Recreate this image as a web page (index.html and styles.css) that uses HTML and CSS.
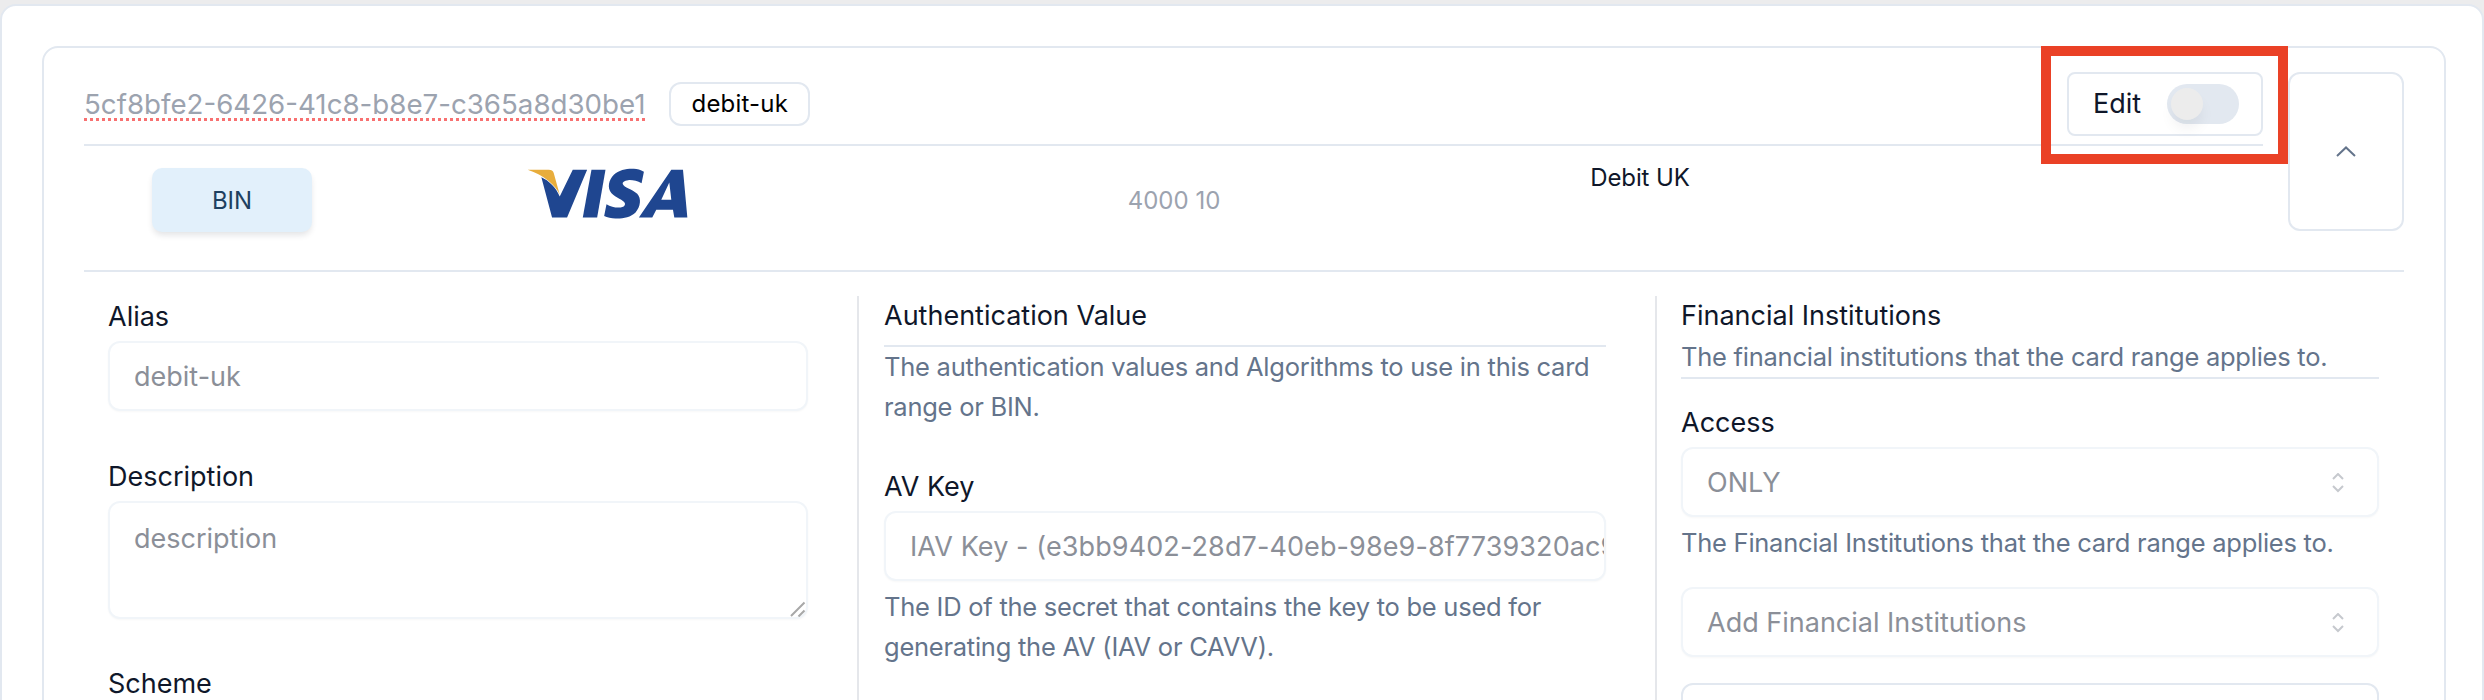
FILE: index.html
```html
<!DOCTYPE html>
<html lang="en">
<head>
<meta charset="utf-8">
<title>Card range</title>
<link rel="stylesheet" href="styles.css">
</head>
<body>
<main class="outer">
  <section class="card">
    <div class="top">
      <div class="top-main">
        <div class="header">
          <div class="ident">
            <span class="uuid">5cf8bfe2-6426-41c8-b8e7-c365a8d30be1</span>
            <span class="badge">debit-uk</span>
          </div>
          <div class="edit-box">
            <span class="edit-label">Edit</span>
            <span class="toggle"><span class="knob"></span></span>
          </div>
          <div class="highlight"></div>
        </div>
        <div class="summary">
          <div class="cell-bin"><span class="bin">BIN</span></div>
          <div class="cell-visa">
            <svg class="visa" viewBox="85 55 485 155" aria-label="VISA">
              <path fill="#e8ad3c" d="M87 60H150C158 60 163 63 165 70L183 135C172 108 135 75 87 60Z"/>
              <path fill="#1f4690" d="M128 82C150 92 172 112 183 140L222 60H265L205 203H160Z"/>
              <path fill="#1f4690" d="M278 60H320L295 203H252Z"/>
              <path fill="#1f4690" d="M435 66L428 100C415 93 400 90 388 91C376 92 370 97 372 103C375 112 400 118 415 132C428 146 425 170 410 188C395 203 370 207 350 206C338 205 325 203 316 198L323 163C335 170 350 174 362 173C374 172 380 167 378 160C375 150 350 143 338 130C324 114 330 90 345 75C360 60 385 56 405 57C415 57 425 60 435 66Z"/>
              <path fill="#1f4690" fill-rule="evenodd" d="M517 60H552L565 203H526L522 180H472L460 203H420ZM517 150L511 98L487 150Z"/>
            </svg>
          </div>
          <div class="cell-range">4000 10</div>
          <div class="cell-name">Debit UK</div>
        </div>
      </div>
      <button class="collapse" type="button" aria-label="Collapse">
        <svg viewBox="0 0 20 11" class="chev"><path d="M1 10L10 1.500L19 10"/></svg>
      </button>
    </div>
    <div class="columns">
      <div class="col col-first">
        <label class="label">Alias</label>
        <div class="field">debit-uk</div>
        <label class="label label-gap">Description</label>
        <div class="field field-area">
          description
          <svg class="grip" viewBox="0 0 16 16"><path d="M1 15L14.500 1.500M8.500 15.500L14.500 9.500"/></svg>
        </div>
        <label class="label label-gap-2">Scheme</label>
      </div>
      <div class="col col-mid">
        <h3 class="heading heading-ruled">Authentication Value</h3>
        <p class="help">The authentication values and Algorithms to use in this card range or BIN.</p>
        <label class="label av-label">AV Key</label>
        <div class="field field-clip"><span class="clip-text">IAV Key - (e3bb9402-28d7-40eb-98e9-8f7739320ac9)</span></div>
        <p class="help help-after">The ID of the secret that contains the key to be used for generating the AV (IAV or CAVV).</p>
      </div>
      <div class="col col-last">
        <h3 class="heading">Financial Institutions</h3>
        <p class="help help-ruled">The financial institutions that the card range applies to.</p>
        <label class="label access-label">Access</label>
        <div class="field field-select">ONLY
          <svg class="updown" viewBox="0 0 12 20"><path d="M1 6L6 1L11 6M1 13L6 18L11 13"/></svg>
        </div>
        <p class="help help-after">The Financial Institutions that the card range applies to.</p>
        <div class="field field-select fi-select">Add Financial Institutions
          <svg class="updown" viewBox="0 0 12 20"><path d="M1 6L6 1L11 6M1 13L6 18L11 13"/></svg>
        </div>
        <div class="field field-empty"></div>
      </div>
    </div>
  </section>
</main>
</body>
</html>
```
FILE: styles.css
```css
* { box-sizing: border-box; }
html, body { margin: 0; height: 700px; overflow: hidden; }
body {
  background: #ececed;
  font-family: Inter, "Liberation Sans", sans-serif;
  font-size: 27px;
  line-height: 40px;
  color: #0f172a;
  padding-top: 4px;
}
.outer {
  height: 760px;
  background: #fff;
  border: 2px solid #e2e8f0;
  border-radius: 16px 16px 0 0;
  padding: 40px 36px 0 40px;
}
.card {
  height: 800px;
  border: 2px solid #e2e8f0;
  border-radius: 16px 16px 0 0;
  padding: 24px 40px 0;
}
.top { display: flex; gap: 25px; align-items: flex-start; }
.top-main { flex: 1; min-width: 0; }
.header {
  position: relative;
  display: flex;
  justify-content: space-between;
  height: 74px;
  border-bottom: 2px solid #e2e8f0;
}
.ident { display: flex; align-items: flex-start; padding-top: 10px; gap: 24px; }
.uuid {
  color: #9ca3af;
  font-size: 27.700px;
  line-height: 44px;
  text-decoration: underline dotted #f87171 3px;
  text-underline-offset: 4px;
}
.badge {
  height: 44px;
  padding: 0 20px;
  border: 2px solid #e2e8f0;
  border-radius: 12px;
  font-size: 24px;
  letter-spacing: 0.2px;
  line-height: 40px;
  color: #000;
}
.edit-box {
  width: 196px;
  height: 64px;
  border: 2px solid #e2e8f0;
  border-radius: 8px;
  display: flex;
  align-items: center;
  padding-left: 24px;
  gap: 26px;
}
.edit-label { color: #0f172a; }
.toggle {
  width: 72px;
  height: 40px;
  border-radius: 20px;
  background: #e2e8f0;
  padding: 4px;
}
.knob {
  display: block;
  width: 32px;
  height: 32px;
  border-radius: 50%;
  background: #ececec;
  box-shadow: 0 10px 15px -3px rgba(15, 23, 42, 0.08);
}
.highlight {
  position: absolute;
  top: -26px;
  right: -25px;
  width: 247px;
  height: 118px;
  border: 10px solid #ea4126;
  pointer-events: none;
}
.summary {
  display: grid;
  grid-template-columns: 296px 456px 676px 256px;
  height: 124px;
  font-size: 24px;
  text-align: center;
}
.cell-bin { padding: 22px 68px 0; }
.bin {
  display: block;
  width: 160px;
  height: 64px;
  border-radius: 10px;
  background: #e2f0fb;
  color: #1e4060;
  line-height: 66px;
  box-shadow: 0 4px 6px -1px rgba(15, 23, 42, 0.12);
}
.cell-visa { padding-top: 22px; display: flex; justify-content: center; }
.visa { display: block; width: 162px; height: 52px; }
.cell-range { color: #9ca3af; padding-top: 35px; }
.cell-name { color: #0f172a; padding-top: 12px; letter-spacing: -0.1px; }
.collapse {
  flex: none;
  width: 116px;
  height: 159px;
  background: #fff;
  border: 2px solid #e2e8f0;
  border-radius: 12px;
  padding: 0;
  display: flex;
  align-items: center;
  justify-content: center;
}
.chev { width: 20px; height: 11px; fill: none; stroke: #64748b; stroke-width: 2; }
.columns {
  display: grid;
  grid-template-columns: 773px 798px 749px;
  border-top: 2px solid #e2e8f0;
  padding-top: 24px;
}
.col { min-width: 0; padding-right: 49px; }
.col-first { padding: 1px 49px 0 24px; }
.col-mid, .col-last { border-left: 2px solid #e5e7eb; height: 500px; }
.col-mid { padding-left: 25px; }
.col-last { padding-left: 24px; padding-right: 25px; }
.label { display: block; color: #0f172a; height: 40px; }
.heading { margin: 0; font-size: 27px; font-weight: 400; line-height: 40px; color: #0f172a; }
.heading-ruled { padding-bottom: 9px; height: 51px; border-bottom: 2px solid #e2e8f0; }
.help { margin: 0; color: #64748b; font-size: 25.500px; letter-spacing: -0.25px; line-height: 40px; }
.help-ruled { margin-top: 1px; border-bottom: 2px solid #e2e8f0; height: 42px; }
.help-after { margin-top: 6px; }
.field {
  position: relative;
  height: 70px;
  margin-top: 4px;
  padding: 0 24px;
  border: 2px solid #f1f5f9;
  border-radius: 12px;
  color: #8b8f98;
  line-height: 67px;
  box-shadow: 0 1px 2px rgba(15, 23, 42, 0.03);
  background: #fff;
}
.field-area { height: 118px; line-height: 40px; padding-top: 16px; }
.grip {
  position: absolute;
  right: 0;
  bottom: 0;
  width: 16px;
  height: 16px;
  fill: none;
  stroke: #a8a8a8;
  stroke-width: 2;
}
.field-clip { overflow: hidden; white-space: nowrap; padding-right: 0; letter-spacing: 0.1px; }
.clip-text { display: block; overflow: hidden; }
.field-select { white-space: nowrap; }
.updown {
  position: absolute;
  right: 33px;
  top: 24px;
  width: 12px;
  height: 20px;
  fill: none;
  stroke: #c6c9ce;
  stroke-width: 2;
}
.field-empty { margin-top: 26px; border-color: #e2e8f0; height: 100px; box-shadow: none; }
.label-gap { margin-top: 46px; }
.label-gap-2 { margin-top: 45px; }
.av-label { margin-top: 40px; }
.access-label { margin-top: 24px; }
.fi-select { margin-top: 24px; }
```
